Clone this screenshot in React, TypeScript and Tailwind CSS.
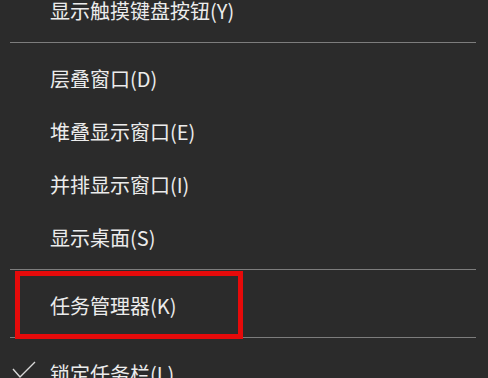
const items = [
  { label: "显示触摸键盘按钮(Y)" },
  { divider: true },
  { label: "层叠窗口(D)" },
  { label: "堆叠显示窗口(E)" },
  { label: "并排显示窗口(I)" },
  { label: "显示桌面(S)" },
  { divider: true },
  { label: "任务管理器(K)", marked: true },
  { divider: true },
  { label: "锁定任务栏(L)", checked: true },
];

const Check = () => (
  <svg
    className="absolute left-[11px] top-[14px]"
    width="26"
    height="22"
    viewBox="0 0 26 22"
    fill="none"
  >
    <path d="M2 8 L9 16 L24 1" stroke="#d8d8d8" strokeWidth="1.4" />
  </svg>
);

export default function App() {
  return (
    <div className="w-[488px] h-[378px] overflow-hidden bg-[#2b2b2b] font-['Microsoft_YaHei','Noto_Sans_CJK_SC',sans-serif]">
      <div className="-mt-4 flex flex-col">
        {items.map((it, i) =>
          it.divider ? (
            <div key={i} className="ml-[10px] w-[466px] mt-[5px] mb-[9px] h-px bg-[#7d7d7d]" />
          ) : (
            <div
              key={i}
              className="relative h-[53px] flex items-center pl-[50px] text-[20px] leading-none text-[#ececec]"
            >
              {it.checked && <Check />}
              <span>{it.label}</span>
              {it.marked && (
                <div className="absolute left-[15px] -top-2 w-[228px] h-[68px] border-[5px] border-[#e60a0a]" />
              )}
            </div>
          )
        )}
      </div>
    </div>
  );
}
